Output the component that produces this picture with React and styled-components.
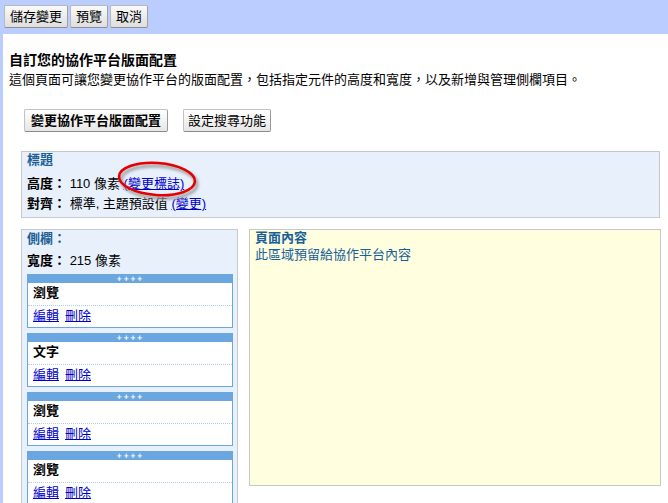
import React from "react";
import styled, { createGlobalStyle } from "styled-components";

const GlobalStyle = createGlobalStyle`
  html, body {
    margin: 0;
    padding: 0;
    overflow: hidden;
    background: #bbccff;
  }
  body {
    font-family: "Liberation Sans", "Noto Sans CJK TC", sans-serif;
    font-size: 13px;
    color: #000;
  }
`;

const Page = styled.div`
  display: flex;
  flex-direction: column;
  height: 503px;
`;

const Toolbar = styled.div`
  display: flex;
  gap: 2px;
  height: 34px;
  padding: 5px 0 0 4px;
  box-sizing: border-box;
`;

const ToolButton = styled.button`
  height: 23px;
  padding: 0 5px;
  font: inherit;
  font-size: 13px;
  line-height: 21px;
  color: #000;
  border: 1px solid #b9b9b9;
  border-bottom-color: #8d8d8d;
  border-right-color: #a0a0a0;
  border-radius: 2px;
  background: linear-gradient(#fafafa, #dedede);
  cursor: pointer;
`;

const Main = styled.div`
  flex: 1;
  margin-left: 3px;
  background: #fff;
  padding: 18px 0 0 6px;
  overflow: hidden;
`;

const Heading = styled.h1`
  margin: 0;
  font-size: 14px;
  line-height: 16px;
  font-weight: bold;
`;

const Description = styled.p`
  margin: 4px 0 0;
  line-height: 16px;
`;

const ButtonRow = styled.div`
  display: flex;
  gap: 15px;
  margin-top: 21px;
  padding-left: 15px;
`;

const ActionButton = styled(ToolButton)`
  font-weight: ${(p) => (p.$bold ? "bold" : "normal")};
  padding: 0 ${(p) => (p.$bold ? 6 : 4)}px;
  background: linear-gradient(#ffffff, #e6e6e6);
  border-color: #c2c2c2 #9a9a9a #8a8a8a #c2c2c2;
`;

const HeaderBox = styled.div`
  position: relative;
  margin: 19px 8px 0 12px;
  padding: 0 5px 3px;
  background: #e8f0fc;
  border: 1px solid #c8c8c8;
`;

const BoxTitle = styled.div`
  font-weight: bold;
  color: #1b5e94;
  line-height: 16px;
`;

const InfoLine = styled.div`
  line-height: 20px;
  margin-top: ${(p) => p.$gap || 0}px;
`;

const Label = styled.b``;

const Link = styled.a`
  color: #0000cc;
  text-decoration: underline;
  cursor: pointer;
`;

const Annotation = styled.svg`
  position: absolute;
  left: 94px;
  top: 6px;
  pointer-events: none;
`;

const Columns = styled.div`
  display: flex;
  align-items: flex-start;
  gap: 11px;
  margin: 11px 7px 0 12px;
`;

const Sidebar = styled.div`
  width: 217px;
  box-sizing: border-box;
  flex-shrink: 0;
  padding: 1px 5px 6px;
  background: #e8f0fc;
  border: 1px solid #c8c8c8;
`;

const SideLine = styled.div`
  line-height: 16px;
  margin-top: ${(p) => p.$gap || 0}px;
`;

const Widget = styled.div`
  margin-top: 5px;
  width: 206px;
  box-sizing: border-box;
  border: 1px solid #6aa6e0;
  background: #fff;
`;

const WidgetBar = styled.div`
  height: 8px;
  background: #6aa6e0;
  color: #fff;
  font-family: "DejaVu Sans", sans-serif;
  font-size: 7px;
  font-weight: bold;
  line-height: 8px;
  letter-spacing: 1px;
  text-align: center;
  cursor: move;
`;

const WidgetTitle = styled.div`
  height: 22px;
  line-height: 20px;
  padding-left: 5px;
  font-weight: bold;
  border-bottom: 1px dotted #a9cff2;
`;

const WidgetLinks = styled.div`
  display: flex;
  gap: 6px;
  height: 21px;
  line-height: 20px;
  padding-left: 5px;
`;

const Content = styled.div`
  flex: 1;
  height: 257px;
  box-sizing: border-box;
  padding: 0 5px;
  background: #ffffe0;
  border: 1px solid #c8c8c8;
  color: #19609a;
`;

const ContentTitle = styled.div`
  font-weight: bold;
  line-height: 16px;
`;

const ContentText = styled.div`
  line-height: 18px;
`;

const widgets = ["瀏覽", "文字", "瀏覽", "瀏覽"];

export default function App() {
  return (
    <>
      <GlobalStyle />
      <Page>
        <Toolbar>
          <ToolButton>儲存變更</ToolButton>
          <ToolButton>預覽</ToolButton>
          <ToolButton>取消</ToolButton>
        </Toolbar>
        <Main>
          <Heading>自訂您的協作平台版面配置</Heading>
          <Description>
            這個頁面可讓您變更協作平台的版面配置，包括指定元件的高度和寬度，以及新增與管理側欄項目。
          </Description>
          <ButtonRow>
            <ActionButton $bold>變更協作平台版面配置</ActionButton>
            <ActionButton>設定搜尋功能</ActionButton>
          </ButtonRow>

          <HeaderBox>
            <BoxTitle>標題</BoxTitle>
            <InfoLine $gap={6}>
              <Label>高度：</Label> 110 像素 <Link>(變更標誌)</Link>
            </InfoLine>
            <InfoLine>
              <Label>對齊：</Label> 標準, 主題預設值 <Link>(變更)</Link>
            </InfoLine>
            <Annotation width="92" height="46" viewBox="0 0 92 46">
              <defs>
                <filter id="blur" x="-20%" y="-40%" width="140%" height="180%">
                  <feGaussianBlur stdDeviation="1.4" />
                </filter>
              </defs>
              <ellipse
                cx="43"
                cy="24"
                rx="38"
                ry="16"
                transform="rotate(4 43 24)"
                fill="none"
                stroke="#9a9a9a"
                strokeWidth="3"
                filter="url(#blur)"
              />
              <ellipse
                cx="41"
                cy="21"
                rx="38"
                ry="16"
                transform="rotate(4 41 21)"
                fill="none"
                stroke="#e60000"
                strokeWidth="2.6"
              />
            </Annotation>
          </HeaderBox>

          <Columns>
            <Sidebar>
              <SideLine>
                <BoxTitle as="span">側欄：</BoxTitle>
              </SideLine>
              <SideLine $gap={6}>
                <Label>寬度：</Label> 215 像素
              </SideLine>
              {widgets.map((name, i) => (
                <Widget key={i}>
                  <WidgetBar>++++</WidgetBar>
                  <WidgetTitle>{name}</WidgetTitle>
                  <WidgetLinks>
                    <Link>編輯</Link>
                    <Link>刪除</Link>
                  </WidgetLinks>
                </Widget>
              ))}
            </Sidebar>
            <Content>
              <ContentTitle>頁面內容</ContentTitle>
              <ContentText>此區域預留給協作平台內容</ContentText>
            </Content>
          </Columns>
        </Main>
      </Page>
    </>
  );
}
